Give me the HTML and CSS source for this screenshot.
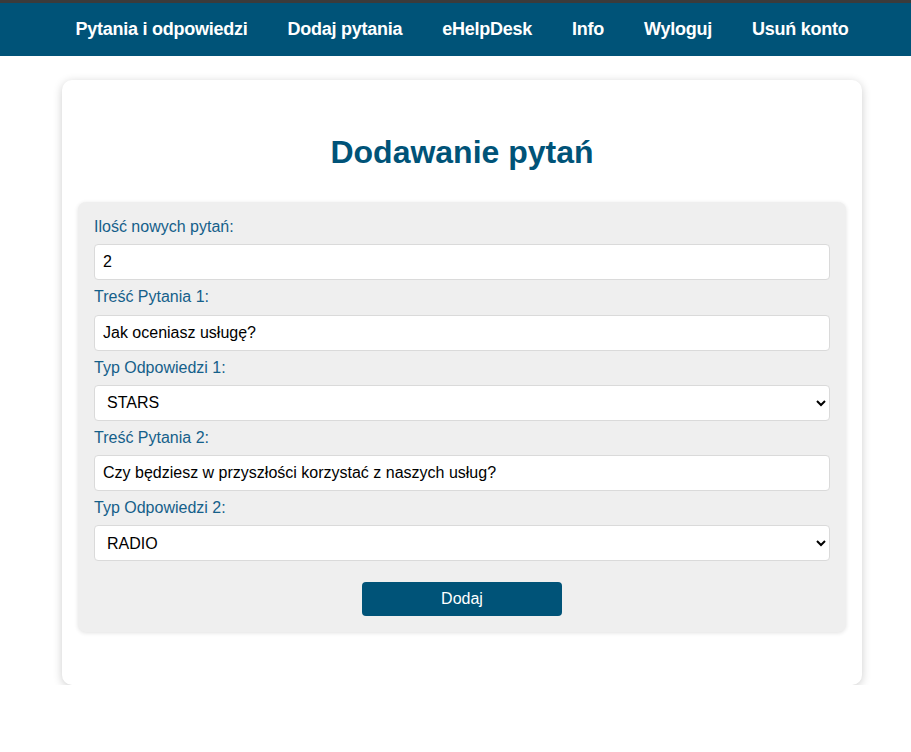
FILE: index.html
```html
<!DOCTYPE html>
<html lang="pl">
<head>
<meta charset="utf-8">
<title>Dodawanie pytań</title>
<link rel="stylesheet" href="styles.css">
</head>
<body>
<nav class="topnav">
  <a href="#">Pytania i odpowiedzi</a>
  <a href="#">Dodaj pytania</a>
  <a href="#">eHelpDesk</a>
  <a href="#">Info</a>
  <a href="#">Wyloguj</a>
  <a href="#">Usuń konto</a>
</nav>
<main class="card">
  <h1 class="title">Dodawanie pytań</h1>
  <form class="form-box">
    <label class="field-label">Ilość nowych pytań:</label>
    <input class="field" type="text" value="2">
    <label class="field-label">Treść Pytania 1:</label>
    <input class="field" type="text" value="Jak oceniasz usługę?">
    <label class="field-label">Typ Odpowiedzi 1:</label>
    <select class="field select">
      <option>STARS</option>
      <option>RADIO</option>
    </select>
    <label class="field-label">Treść Pytania 2:</label>
    <input class="field" type="text" value="Czy będziesz w przyszłości korzystać z naszych usług?">
    <label class="field-label">Typ Odpowiedzi 2:</label>
    <select class="field select">
      <option>RADIO</option>
      <option>STARS</option>
    </select>
    <button class="submit" type="button">Dodaj</button>
  </form>
</main>
</body>
</html>
```
FILE: styles.css
```css
* { box-sizing: border-box; }
body {
  margin: 0;
  font-family: "Liberation Sans", Arial, sans-serif;
  background: #fff;
}
.topnav {
  display: flex;
  justify-content: center;
  gap: 40px;
  height: 56px;
  border-top: 3px solid #3b3b3b;
  background: #005378;
  align-items: center;
  padding-left: 13px;
}
.topnav a {
  color: #fff;
  text-decoration: none;
  font-weight: bold;
  font-size: 18px;
  letter-spacing: -0.25px;
}
.card {
  width: 800px;
  margin: 24px 0 0 62px;
  background: #fff;
  border-radius: 10px;
  box-shadow: 0 2px 10px rgba(0,0,0,0.2);
  padding: 54px 16px 53px;
}
.title {
  margin: 0 0 31px;
  text-align: center;
  font-size: 32px;
  line-height: 37px;
  color: #005378;
}
.form-box {
  display: flex;
  flex-direction: column;
  background: #efefef;
  border-radius: 8px;
  padding: 16px;
  box-shadow: 0 1px 4px rgba(0,0,0,0.12);
}
.field-label {
  color: #15608a;
  font-size: 16px;
  line-height: 18.25px;
  margin-bottom: 8px;
}
.field {
  flex: none;
  height: 36px;
  border: 1px solid #dadada;
  border-radius: 4px;
  background: #fff;
  font-family: "Liberation Sans", Arial, sans-serif;
  font-size: 16px;
  color: #000;
  padding: 0 8px;
  margin-bottom: 8px;
}
.select {
  padding: 0 6px 0 8px;
}
.submit {
  flex: none;
  align-self: center;
  width: 200px;
  height: 34px;
  margin-top: 13px;
  border: none;
  border-radius: 4px;
  background: #005378;
  color: #fff;
  font-family: "Liberation Sans", Arial, sans-serif;
  font-size: 16px;
}
```
